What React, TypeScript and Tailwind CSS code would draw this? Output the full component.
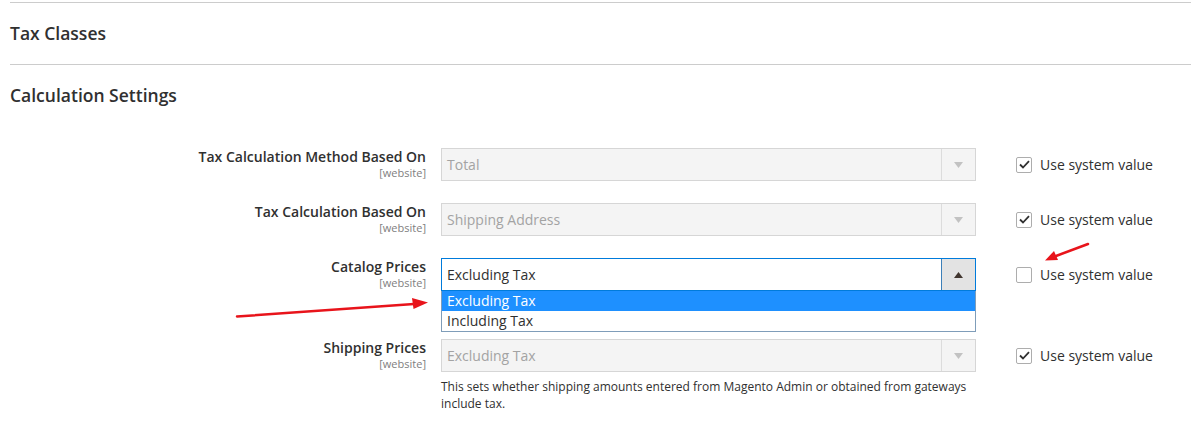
import React from "react";

const font = { fontFamily: '"Open Sans", "Noto Sans", sans-serif' };

function Arrow({ up }: { up?: boolean }) {
	return (
		<svg width="9" height="6" viewBox="0 0 9 6" className={up ? "" : "rotate-180"}>
			<path d="M4.5 0 L9 6 L0 6 Z" fill="currentColor" />
		</svg>
	);
}

function Checkbox({ checked }: { checked?: boolean }) {
	return (
		<div className="flex items-center gap-[8px]">
			<div className="w-[16px] h-[16px] border border-[#adadad] rounded-[2px] bg-white flex items-center justify-center">
				{checked && (
					<svg width="11" height="9" viewBox="0 0 11 9">
						<path d="M1 4.5 L4 7.5 L10 1.2" fill="none" stroke="#303030" strokeWidth="1.8" />
					</svg>
				)}
			</div>
			<span className="text-[14px] text-[#303030]">Use system value</span>
		</div>
	);
}

function DisabledSelect({ value }: { value: string }) {
	return (
		<div className="h-[33px] flex border border-[#d6d6d6] bg-[#f4f4f4]">
			<div className="flex-1 flex items-center px-[5px] text-[14px] text-[#a3a3a3]">{value}</div>
			<div className="w-[34px] border-l border-[#dcdcdc] flex items-center justify-center text-[#c2c2c2]">
				<Arrow />
			</div>
		</div>
	);
}

function Label({ text }: { text: string }) {
	return (
		<div className="w-[426px] text-right">
			<div className="text-[14px] font-semibold text-[#303030] leading-[18px]">{text}</div>
			<div className="text-[11px] text-[#808080] leading-[13px]">[website]</div>
		</div>
	);
}

export default function App() {
	return (
		<div style={font} className="relative w-[1191px] h-[421px] bg-white overflow-hidden">
			<div className="ml-[10px] pt-[2px]">
				<div className="border-t border-[#cccccc] h-[62px] flex items-center">
					<h2 className="text-[17.5px] font-semibold text-[#303030]">Tax Classes</h2>
				</div>
				<div className="border-t border-[#cccccc] h-[62px] flex items-center">
					<h2 className="text-[17.5px] font-semibold text-[#303030]">Calculation Settings</h2>
				</div>
			</div>

			<div className="mt-[22px]">
				<div className="flex mb-[22px]">
					<Label text="Tax Calculation Method Based On" />
					<div className="ml-[15px] w-[535px]">
						<DisabledSelect value="Total" />
					</div>
					<div className="ml-[40px] h-[33px] flex items-center">
						<Checkbox checked />
					</div>
				</div>

				<div className="flex mb-[22px]">
					<Label text="Tax Calculation Based On" />
					<div className="ml-[15px] w-[535px]">
						<DisabledSelect value="Shipping Address" />
					</div>
					<div className="ml-[40px] h-[33px] flex items-center">
						<Checkbox checked />
					</div>
				</div>

				<div className="flex mb-[7px]">
					<Label text="Catalog Prices" />
					<div className="ml-[15px] w-[535px]">
						<div className="h-[33px] flex border border-[#007bdb] bg-white">
							<div className="flex-1 flex items-center px-[5px] text-[14px] text-[#303030]">Excluding Tax</div>
							<div className="w-[34px] border-l border-[#3b7fb8] bg-[#e3e3e3] flex items-center justify-center text-[#41362f]">
								<Arrow up />
							</div>
						</div>
						<div className="border border-t-0 border-[#7f9db9] bg-white text-[14px] leading-[20px]">
							<div className="bg-[#1e90ff] text-white px-[5px]">Excluding Tax</div>
							<div className="text-[#303030] px-[5px]">Including Tax</div>
						</div>
					</div>
					<div className="ml-[40px] h-[33px] flex items-center">
						<Checkbox />
					</div>
				</div>

				<div className="flex">
					<Label text="Shipping Prices" />
					<div className="ml-[15px] w-[535px]">
						<DisabledSelect value="Excluding Tax" />
						<p className="mt-[6px] text-[12px] leading-[17px] text-[#303030]">
							This sets whether shipping amounts entered from Magento Admin or obtained from gateways include tax.
						</p>
					</div>
					<div className="ml-[40px] h-[33px] flex items-center">
						<Checkbox checked />
					</div>
				</div>
			</div>

			<svg className="absolute inset-0 pointer-events-none" width="1191" height="421">
				<line x1="237" y1="316.5" x2="414" y2="304" stroke="#e8141b" strokeWidth="2.5" strokeLinecap="round" />
				<path d="M428 302.5 L412 298 L413.5 309 Z" fill="#e8141b" />
				<line x1="1088" y1="244" x2="1056" y2="256" stroke="#e8141b" strokeWidth="2.5" strokeLinecap="round" />
				<path d="M1045 260.5 L1054 251 L1058 260 Z" fill="#e8141b" />
			</svg>
		</div>
	);
}
